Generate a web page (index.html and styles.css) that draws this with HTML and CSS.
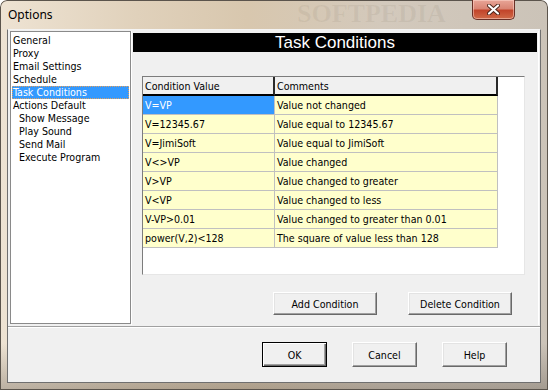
FILE: index.html
```html
<!DOCTYPE html>
<html lang="en">
<head>
  <meta charset="UTF-8">
  <title>Options</title>
  <link rel="stylesheet" href="styles.css">
</head>
<body>
  <div class="window">
    <div class="titlebar">
      <span class="title">Options</span>
      <span class="watermark">SOFTPEDIA</span>
      <button class="close" aria-label="Close">
        <svg width="13" height="11" viewBox="0 0 13 11">
          <path d="M2 1.5 L11 9.5 M11 1.5 L2 9.5" stroke="#4a2418" stroke-width="4" stroke-linecap="round"/>
          <path d="M2 1.5 L11 9.5 M11 1.5 L2 9.5" stroke="#fff" stroke-width="2.2" stroke-linecap="round"/>
        </svg>
      </button>
    </div>

    <div class="client">
      <div class="main">
        <!-- lista de secciones -->
        <ul class="nav">
          <li>General</li>
          <li>Proxy</li>
          <li>Email Settings</li>
          <li>Schedule</li>
          <li class="selected">Task Conditions</li>
          <li>Actions Default</li>
          <li class="sub">Show Message</li>
          <li class="sub">Play Sound</li>
          <li class="sub">Send Mail</li>
          <li class="sub">Execute Program</li>
        </ul>

        <section class="panel">
          <h1 class="panel-title">Task Conditions</h1>
          <div class="grid-box">
            <table class="conditions">
              <thead>
                <tr>
                  <th class="col-value">Condition Value</th>
                  <th class="col-comment">Comments</th>
                </tr>
              </thead>
              <tbody>
                <tr><td class="current">V=VP</td><td>Value not changed</td></tr>
                <tr><td>V=12345.67</td><td>Value equal to 12345.67</td></tr>
                <tr><td>V=JimiSoft</td><td>Value equal to JimiSoft</td></tr>
                <tr><td>V&lt;&gt;VP</td><td>Value changed</td></tr>
                <tr><td>V&gt;VP</td><td>Value changed to greater</td></tr>
                <tr><td>V&lt;VP</td><td>Value changed to less</td></tr>
                <tr><td>V-VP&gt;0.01</td><td>Value changed to greater than 0.01</td></tr>
                <tr><td>power(V,2)&lt;128</td><td>The square of value less than 128</td></tr>
              </tbody>
            </table>
          </div>
          <div class="panel-actions">
            <button class="btn wide">Add Condition</button>
            <button class="btn wide">Delete Condition</button>
          </div>
        </section>
      </div>

      <div class="footer">
        <button class="btn default">OK</button>
        <button class="btn">Cancel</button>
        <button class="btn">Help</button>
      </div>
    </div>
  </div>
</body>
</html>
```

FILE: styles.css
```css
/* Reset básico */
* {
  margin: 0;
  padding: 0;
  box-sizing: border-box;
}
body {
  width: 548px;
  height: 390px;
  overflow: hidden;
  background: #fff;
  font-family: "DejaVu Sans Condensed", "DejaVu Sans", sans-serif;
  font-stretch: condensed;
  font-size: 10.6px;
  color: #000;
}
.window {
  position: relative;
  width: 548px;
  height: 390px;
  padding: 0 7px 7px 7px;
  display: flex;
  flex-direction: column;
  border-radius: 7px 7px 0 0;
  background:
    linear-gradient(180deg, rgba(255,255,255,0) 88%, rgba(90,80,70,0.35) 100%),
    linear-gradient(90deg, #eee3d3 0%, #e0d1bb 25%, #d8c7ae 45%, #d3c9bc 70%, #cbc3b8 100%);
  box-shadow: inset 0 0 0 1px #5b544c;
}
.titlebar {
  position: relative;
  height: 29px;
  display: flex;
  align-items: flex-start;
}
.title {
  padding-left: 1px;
  line-height: 30px;
  font-family: "Noto Sans", "Open Sans", sans-serif;
  font-stretch: normal;
  font-size: 12px;
  color: #000;
}
.watermark {
  position: absolute;
  left: 290px;
  top: 1px;
  line-height: 26px;
  font-family: "Liberation Serif", serif;
  font-stretch: normal;
  font-weight: bold;
  font-size: 26px;
  color: rgba(110, 95, 80, 0.09);
}
.close {
  position: relative;
  margin-left: auto;
  margin-right: 26px;
  width: 43px;
  height: 20px;
  display: flex;
  align-items: center;
  justify-content: center;
  border: 1px solid #6a3027;
  border-top: none;
  border-radius: 0 0 5px 5px;
  background: linear-gradient(180deg, #e8a597 0%, #d98574 45%, #c2452b 55%, #cf6a48 100%);
  box-shadow: inset 0 0 0 1px rgba(255, 220, 210, 0.5);
}
.client {
  flex: 1;
  display: flex;
  flex-direction: column;
  background: #f0f0f0;
  border: 1px solid #6f6f6f;
  border-top-color: #f4f4f4;
}
.main {
  height: 296px;
  display: flex;
  align-items: flex-start;
  padding: 1px 1px 0 2px;
}
.nav {
  list-style: none;
  width: 121px;
  height: 293px;
  padding-top: 2px;
  background: #fff;
  border: 1px solid #8a8a8a;
}
.nav li {
  margin: 0 1px;
  padding: 0 1px;
  height: 13px;
  line-height: 13px;
  white-space: nowrap;
}
.nav li.sub {
  padding-left: 7px;
}
.nav li.selected {
  background: #3399ff;
  color: #fff;
  outline: 1px dotted #e0a060;
  outline-offset: -1px;
}
.panel {
  flex: 1;
  height: 294px;
  border-left: 1px solid #fff;
  border-right: 1px solid #fff;
}
.panel-title {
  margin: 2px 1px 0 1px;
  height: 19px;
  background: #000;
  color: #fff;
  text-align: center;
  font-family: "Liberation Sans", sans-serif;
  font-stretch: normal;
  font-weight: normal;
  font-size: 17px;
  line-height: 19px;
}
.grid-box {
  margin: 24px 0 0 10px;
  width: 383px;
  height: 199px;
  background: #fff;
  border: 1px solid;
  border-color: #7c7c7c #e6e6e6 #e6e6e6 #7c7c7c;
}
.conditions {
  table-layout: fixed;
  border-collapse: separate;
  border-spacing: 0;
  width: 355px;
}
.conditions th,
.conditions td {
  height: 19px;
  padding: 0 2px;
  text-align: left;
  font-weight: normal;
  white-space: nowrap;
  overflow: hidden;
}
.conditions th {
  background: #f0f0f0;
  border-right: 2px solid #2a2a2a;
  border-bottom: 2px solid #000;
  line-height: 16px;
}
.conditions th.col-value {
  width: 132px;
}
.conditions th.col-comment {
  width: 223px;
}
.conditions td {
  background: #ffffcc;
  border-right: 1px solid #c0c0c0;
  border-bottom: 1px solid #c0c0c0;
  line-height: 18px;
}
.conditions td.current {
  background: #3399ff;
  color: #fff;
}
.panel-actions {
  margin-top: 17px;
  padding-right: 26px;
  display: flex;
  justify-content: flex-end;
  gap: 31px;
}
.btn {
  width: 65px;
  height: 25px;
  font-family: inherit;
  font-stretch: condensed;
  font-size: 10.6px;
  color: #000;
  background: #f0f0f0;
  border: 1px solid;
  border-color: #fff #696969 #696969 #fff;
  box-shadow: inset -1px -1px #a0a0a0, inset 1px 1px #e3e3e3;
}
.btn.wide {
  width: 104px;
  height: 23px;
}
.btn.default {
  border: 1px solid #000;
  box-shadow: inset 1px 1px #fff, inset -1px -1px #696969, inset -2px -2px #a0a0a0;
}
.footer {
  flex: 1;
  display: flex;
  align-items: center;
  justify-content: flex-end;
  gap: 25px;
  padding-right: 33px;
  border-top: 1px solid #a0a0a0;
  box-shadow: inset 0 1px #fff;
}
```
